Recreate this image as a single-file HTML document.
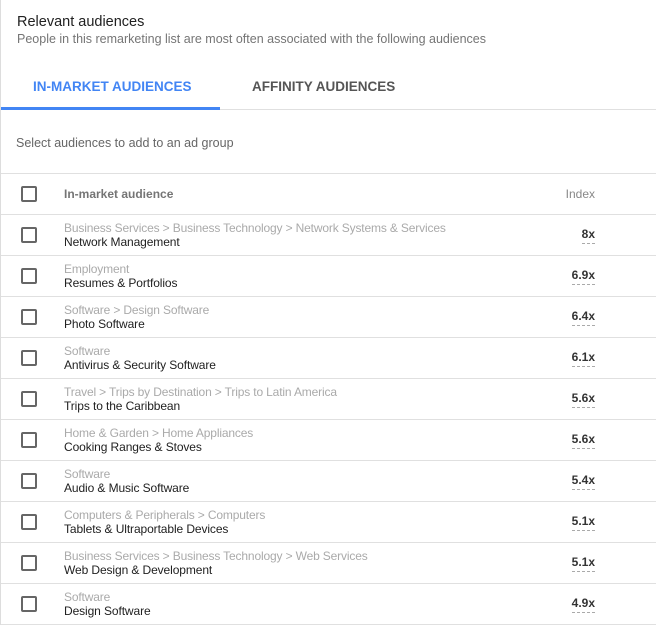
<!DOCTYPE html>
<html><head><meta charset="utf-8"><style>
*{margin:0;padding:0;box-sizing:border-box}
body{width:656px;height:625px;background:#fff;font-family:"Liberation Sans",Arial,sans-serif;position:relative;overflow:hidden;border-left:1px solid #ddd}
.abs{position:absolute;white-space:nowrap}
.title{left:16px;top:14px;font-size:14.5px;color:#212121}
.sub{left:16px;top:32px;font-size:12.5px;color:#757575}
.tab{top:79px;font-size:13.5px;font-weight:bold;letter-spacing:0}
.line{position:absolute;left:0;width:656px;height:1px;background:#e0e0e0}
.cb{position:absolute;left:20px;width:16px;height:16px;border:2px solid #666;border-radius:2px}
.cat{left:63px;font-size:12px;color:#aaa;letter-spacing:-0.15px}
.name{left:63px;font-size:12px;color:#212121;letter-spacing:-0.1px}
.idx{right:61px;font-size:12px;font-weight:bold;color:#333;border-bottom:1px dashed #aaa;padding-bottom:2px}
</style></head><body>
<div class="abs title">Relevant audiences</div>
<div class="abs sub">People in this remarketing list are most often associated with the following audiences</div>
<div class="abs tab" style="left:32px;color:#4285f4">IN-MARKET AUDIENCES</div>
<div class="abs tab" style="left:251px;color:#555">AFFINITY AUDIENCES</div>
<div class="line" style="top:109px"></div>
<div style="position:absolute;left:0;top:107px;width:219px;height:3px;background:#4285f4"></div>
<div class="abs" style="left:15px;top:136px;font-size:12.5px;color:#666">Select audiences to add to an ad group</div>
<div class="line" style="top:173px"></div>
<div class="cb" style="top:186px"></div>
<div class="abs" style="left:63px;top:187px;font-size:12px;color:#757575;font-weight:bold">In-market audience</div>
<div class="abs" style="right:61px;top:187px;font-size:12px;color:#888">Index</div>
<div class="line" style="top:214px"></div>
<div id="rows"></div>
<script>
var d=[["Business Services > Business Technology > Network Systems & Services","Network Management","8x"],
["Employment","Resumes & Portfolios","6.9x"],
["Software > Design Software","Photo Software","6.4x"],
["Software","Antivirus & Security Software","6.1x"],
["Travel > Trips by Destination > Trips to Latin America","Trips to the Caribbean","5.6x"],
["Home & Garden > Home Appliances","Cooking Ranges & Stoves","5.6x"],
["Software","Audio & Music Software","5.4x"],
["Computers & Peripherals > Computers","Tablets & Ultraportable Devices","5.1x"],
["Business Services > Business Technology > Web Services","Web Design & Development","5.1x"],
["Software","Design Software","4.9x"]];
var h="";
d.forEach(function(r,i){var t=214+i*41;
h+='<div class="cb" style="top:'+(t+13)+'px"></div>';
h+='<div class="abs cat" style="top:'+(t+7)+'px">'+r[0].replace(/&/g,"&amp;").replace(/>/g,"&gt;")+'</div>';
h+='<div class="abs name" style="top:'+(t+21)+'px">'+r[1].replace(/&/g,"&amp;")+'</div>';
h+='<div class="abs idx" style="top:'+(t+13)+'px">'+r[2]+'</div>';
h+='<div class="line" style="top:'+(t+41)+'px"></div>';});
document.getElementById("rows").innerHTML=h;
</script>
</body></html>
